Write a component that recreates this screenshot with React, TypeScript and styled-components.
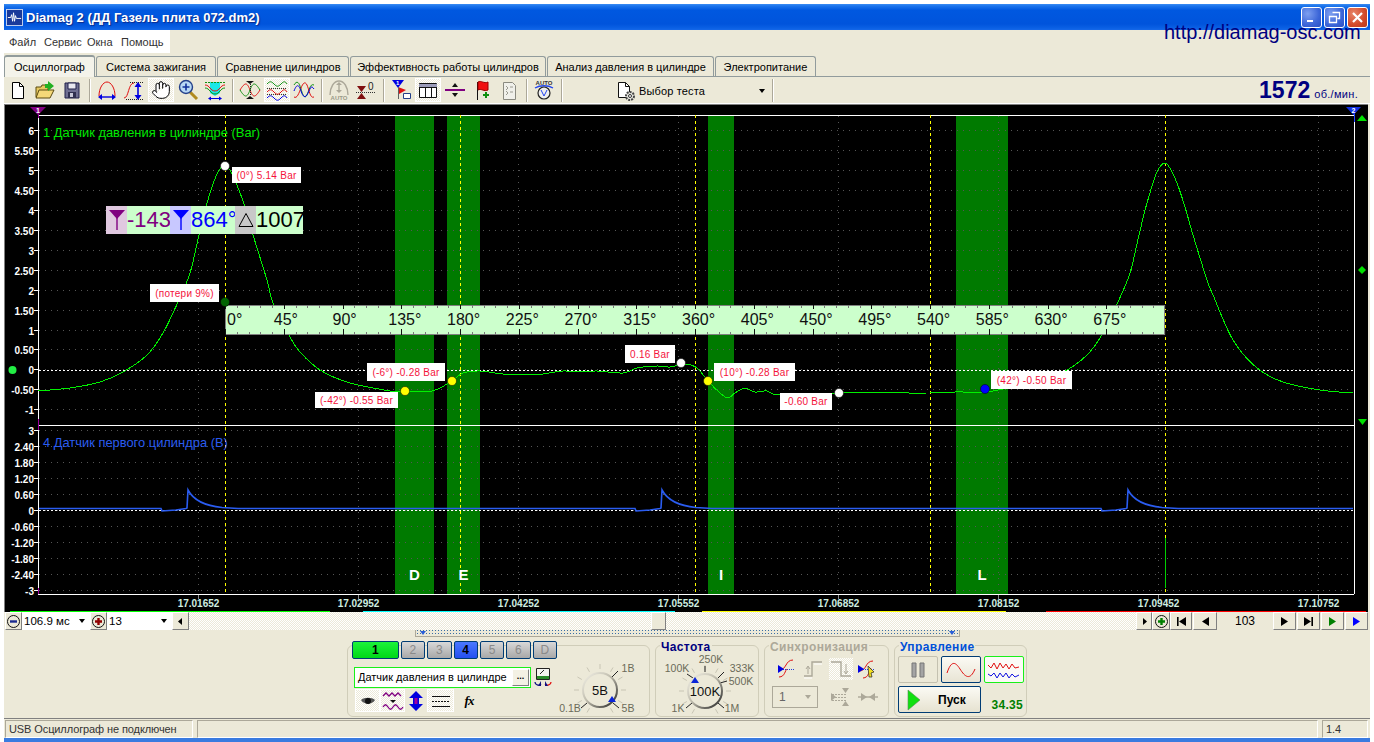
import styled, { createGlobalStyle } from "styled-components";
import { Hand } from "lucide-react";

const FONT = `"Liberation Sans", Arial, sans-serif`;
const BG = "#ece9d8";
const CHECKER = `repeating-conic-gradient(#ffffff 0 25%, #ece9d8 0 50%) 0 0 / 2px 2px`;

/* ---------- chart data, all in page pixels ---------- */
const PEAK: number[][] = [
    [38, 391], [70, 388], [100, 382], [123, 372], [147, 355], [163, 333], [178, 302], [190, 273],
    [199, 235], [207, 203], [217, 174], [225, 165], [231, 172], [237, 185], [245, 207], [253, 235],
    [267, 280], [273, 303], [290, 337], [300, 352], [320, 370], [350, 383], [390, 391],
];
const MIDDLE: number[][] = [
    [405, 391.5], [432, 391], [452, 381], [463, 373], [480, 371], [503, 374], [527, 375], [543, 374],
    [563, 371], [580, 372], [597, 371], [623, 373], [637, 368], [657, 366], [670, 367], [685, 364],
    [697, 368], [708, 381], [720, 393], [728, 398], [735, 393], [745, 388], [755, 392], [767, 391],
    [780, 395], [839, 393], [930, 393], [955, 392], [985, 392], [1003, 389], [1030, 382],
];
const SECOND: number[][] = [
    [1063, 372], [1087, 355], [1103, 333], [1118, 302], [1130, 273], [1139, 235], [1147, 203],
    [1157, 172], [1165, 163], [1171, 170], [1177, 183], [1185, 207], [1193, 235], [1207, 280],
    [1213, 295], [1233, 340], [1257, 368], [1283, 382], [1320, 390], [1353, 393],
];

function smooth(p: number[][]) {
    let d = `M${p[0][0]} ${p[0][1]}`;
    for (let i = 0; i < p.length - 1; i++) {
        const a = p[Math.max(i - 1, 0)];
        const b = p[i];
        const c = p[i + 1];
        const e = p[Math.min(i + 2, p.length - 1)];
        d += `C${b[0] + (c[0] - a[0]) / 6} ${b[1] + (c[1] - a[1]) / 6} ${c[0] - (e[0] - b[0]) / 6} ${c[1] - (e[1] - b[1]) / 6} ${c[0]} ${c[1]}`;
    }
    return d;
}

function blueTrace() {
    let d = "M39 508.5";
    [188, 662, 1128].forEach((s) => {
        d += `L${s - 27} 508.5 L${s - 26} 511 L${s - 12} 510 L${s - 2} 508.5 L${s - 1} 508 L${s} 490 `;
        d += `Q${s + 8} 505 ${s + 34} 507.5 L${s + 50} 508.5 `;
    });
    return d + "L1353 508.5";
}

const BANDS = [
    { x: 395, w: 39, t: "D" },
    { x: 447, w: 33, t: "E" },
    { x: 708, w: 26, t: "I" },
    { x: 956, w: 52, t: "L" },
];
const CURSORS = [225.5, 460.5, 695.5, 930.5, 1165.5];
const GRID_X = [198.5, 358.5, 518.5, 678.5, 838.5, 998.5, 1158.5, 1318.5];
const TIMES = ["17.01652", "17.02952", "17.04252", "17.05552", "17.06852", "17.08152", "17.09452", "17.10752"];
const TOP_AXIS = ["6", "5.50", "5", "4.50", "4", "3.50", "3", "2.50", "2", "1.50", "1", "0.50", "0", "-0.50", "-1"];
const LOW_AXIS = ["3", "2.40", "1.80", "1.20", "0.60", "0", "-0.60", "-1.20", "-1.80", "-2.40", "-3"];
const STRIP = [
    { x: 10, w: 320, c: "#00ff00" },
    { x: 363, w: 312, c: "#00ffff" },
    { x: 702, w: 304, c: "#ffff00" },
    { x: 1046, w: 320, c: "#ff0000" },
];
const TAGS = [
    { x: 232, y: 167, w: 69, h: 16, t: "(0°) 5.14 Bar" },
    { x: 150, y: 284, w: 69, h: 18, t: "(потери 9%)" },
    { x: 367, y: 363, w: 78, h: 18, t: "(-6°) -0.28 Bar" },
    { x: 315, y: 392, w: 83, h: 16, t: "(-42°) -0.55 Bar" },
    { x: 625, y: 345, w: 50, h: 18, t: "0.16 Bar" },
    { x: 714, y: 363, w: 81, h: 18, t: "(10°) -0.28 Bar" },
    { x: 780, y: 393, w: 52, h: 17, t: "-0.60 Bar" },
    { x: 991, y: 371, w: 81, h: 18, t: "(42°) -0.50 Bar" },
];
const DOTS = [
    { x: 225, y: 166, c: "#ffffff" },
    { x: 225, y: 302, c: "#006400" },
    { x: 405, y: 391, c: "#ffff00" },
    { x: 452, y: 381, c: "#ffff00" },
    { x: 708, y: 381, c: "#ffff00" },
    { x: 681, y: 363, c: "#ffffff" },
    { x: 839, y: 393, c: "#ffffff" },
    { x: 985, y: 389, c: "#0000ff" },
];

/* ---------- window shell ---------- */
const GlobalStyle = createGlobalStyle`
    html, body { margin: 0; padding: 0; background: #ffffff; }
    body { font-family: ${FONT}; overflow: hidden; }
    #root { padding: 4px 0 0 4px; }
`;

const Window = styled.div`
    position: relative;
    width: 1366px;
    height: 738px;
    background: ${BG};
    display: flex;
    flex-direction: column;
    overflow: hidden;
`;

const TitleBar = styled.div`
    height: 26px;
    display: flex;
    align-items: center;
    padding: 0 2px;
    gap: 3px;
    box-sizing: border-box;
    background: linear-gradient(to bottom, #3b8cf2 0, #1b74ec 2px, #0058e0 6px, #0054dc 20px, #0a60e4 24px, #1668e8 26px);
`;

const TitleText = styled.span`
    color: #ffffff;
    font-size: 13px;
    font-weight: bold;
    text-shadow: 1px 1px 1px #0c2a8a;
    white-space: nowrap;
`;

const WindowButtons = styled.div`
    margin-left: auto;
    display: flex;
    gap: 2px;
`;

const WindowButton = styled.div<{ $close?: boolean }>`
    width: 21px;
    height: 21px;
    box-sizing: border-box;
    border: 1px solid #ffffff;
    border-radius: 3px;
    display: flex;
    align-items: center;
    justify-content: center;
    background: ${(p) =>
        p.$close
            ? "radial-gradient(circle at 30% 30%, #e8866a, #d2492a 60%, #b93a1c)"
            : "radial-gradient(circle at 30% 30%, #7d9ff0, #3c66d8 60%, #2a50c4)"};
`;

const SiteLink = styled.div`
    position: absolute;
    top: 17px;
    left: 1160px;
    font-size: 20px;
    color: #000080;
    white-space: nowrap;
`;

const MenuBar = styled.div`
    height: 23px;
    width: 166px;
    background: #ffffff;
    display: flex;
    align-items: center;
    font-size: 11px;
    color: #333333;
    padding-left: 5px;
    box-sizing: border-box;
`;

const MenuItem = styled.span<{ $w: number }>`
    width: ${(p) => p.$w}px;
    white-space: nowrap;
`;

const TabStrip = styled.div`
    height: 24px;
    box-sizing: border-box;
    display: flex;
    align-items: flex-end;
    border-bottom: 1px solid #919b9c;
    gap: 1px;
`;

const Tab = styled.div<{ $w: number; $active?: boolean }>`
    width: ${(p) => p.$w}px;
    height: ${(p) => (p.$active ? 22 : 20)}px;
    margin-bottom: ${(p) => (p.$active ? -1 : 0)}px;
    box-sizing: border-box;
    border: 1px solid #919b9c;
    border-bottom: none;
    border-radius: 3px 3px 0 0;
    background: ${(p) => (p.$active ? "#f4f3ea" : BG)};
    border-top: ${(p) => (p.$active ? "2px solid #919b9c" : "1px solid #919b9c")};
    font-size: 11px;
    color: #000000;
    display: flex;
    align-items: center;
    justify-content: center;
    white-space: nowrap;
`;

const Toolbar = styled.div`
    height: 27px;
    box-sizing: border-box;
    padding: 1px 0 1px 1px;
    display: flex;
    align-items: center;
    border-bottom: 1px solid #ffffff;
`;

const ToolGroup = styled.div`
    display: flex;
    gap: 1px;
`;

const ToolButton = styled.div<{ $pressed?: boolean }>`
    width: 26px;
    height: 24px;
    box-sizing: border-box;
    display: flex;
    align-items: center;
    justify-content: center;
    ${(p) =>
        p.$pressed &&
        `background: ${CHECKER};
         border: 1px solid #ffffff;`}
`;

const ToolSep = styled.div`
    width: 2px;
    height: 23px;
    margin: 0 3px 0 4px;
    border-left: 1px solid #aca899;
    border-right: 1px solid #ffffff;
    box-sizing: border-box;
`;

const TestPicker = styled.div`
    width: 202px;
    display: flex;
    align-items: center;
    font-size: 11px;
    letter-spacing: 0.15px;
    padding: 1px 0 0 49px;
    box-sizing: border-box;
    gap: 2px;
`;

const Caret = styled.span<{ $right?: number }>`
    width: 0;
    height: 0;
    margin-left: ${(p) => p.$right ?? 0}px;
    border-left: 3.5px solid transparent;
    border-right: 3.5px solid transparent;
    border-top: 4px solid #000000;
`;

const Rpm = styled.div`
    margin-left: auto;
    padding-right: 12px;
    display: flex;
    align-items: baseline;
    gap: 4px;
    color: #000080;
    font-size: 11px;
    letter-spacing: 0.3px;
`;

const RpmValue = styled.span`
    font-size: 23px;
    font-weight: bold;
    letter-spacing: 0;
`;

/* ---------- chart ---------- */
const ChartPanel = styled.div`
    position: relative;
    height: 508px;
    margin-right: 2px;
    box-sizing: border-box;
    border-left: 1px solid #808080;
    border-top: 1px solid #808080;
    background: #000000;
`;

const ChartSvg = styled.svg`
    display: block;
    font-family: ${FONT};
`;

const AxisText = styled.text`
    fill: #ffffff;
    font-size: 10px;
    font-weight: bold;
    text-anchor: end;
`;

const TimeText = styled.text`
    fill: #cfeee0;
    font-size: 10px;
    font-weight: bold;
    text-anchor: middle;
`;

const ChannelTitle = styled.text<{ $c: string }>`
    fill: ${(p) => p.$c};
    font-size: 12.9px;
`;

const BandLetter = styled.text`
    fill: #ffffff;
    font-size: 15px;
    font-weight: bold;
    text-anchor: middle;
`;

const ScaleText = styled.text`
    fill: #101010;
    font-size: 16px;
`;

const Tag = styled.div<{ $x: number; $y: number; $w: number; $h: number }>`
    position: absolute;
    left: ${(p) => p.$x - 5}px;
    top: ${(p) => p.$y - 105}px;
    width: ${(p) => p.$w}px;
    height: ${(p) => p.$h}px;
    background: #ffffff;
    color: #f4123c;
    font-size: 10px;
    letter-spacing: 0.25px;
    display: flex;
    align-items: center;
    justify-content: center;
    white-space: nowrap;
`;

const Readout = styled.div`
    position: absolute;
    left: 101px;
    top: 101px;
    height: 28px;
    display: flex;
    font-size: 22px;
    line-height: 28px;
    background: #ccffcc;
`;

const ReadoutIcon = styled.div<{ $bg: string }>`
    width: 21px;
    background: ${(p) => p.$bg};
    display: flex;
    align-items: center;
    justify-content: center;
`;

const ReadoutValue = styled.div<{ $c: string; $w: number }>`
    width: ${(p) => p.$w}px;
    color: ${(p) => p.$c};
    text-align: center;
    white-space: nowrap;
`;

/* ---------- scroll row ---------- */
const ScrollRow = styled.div`
    height: 18px;
    padding-left: 1px;
    padding-right: 2px;
    display: flex;
`;

const Raised = styled.div<{ $w: number }>`
    width: ${(p) => p.$w}px;
    flex: none;
    box-sizing: border-box;
    border: 1px solid;
    border-color: #ffffff #808080 #808080 #ffffff;
    background: ${BG};
    display: flex;
    align-items: center;
    justify-content: center;
`;

const ComboCell = styled.div<{ $w: number }>`
    width: ${(p) => p.$w}px;
    flex: none;
    box-sizing: border-box;
    background: #ffffff;
    font-size: 11.5px;
    padding: 0 5px 0 2px;
    display: flex;
    align-items: center;
    justify-content: space-between;
    white-space: nowrap;
`;

const Track = styled.div`
    position: relative;
    flex: 1;
    background: ${CHECKER};
`;

const Thumb = styled(Raised)`
    position: absolute;
    left: 462px;
    top: 0;
    height: 18px;
`;

const Counter = styled.div`
    width: 56px;
    text-align: center;
    font-size: 12px;
    line-height: 18px;
`;

const NavGroup = styled.div`
    display: flex;
    gap: 1px;
`;

/* ---------- control groups ---------- */
const Controls = styled.div`
    height: 88px;
    flex: none;
    display: flex;
    flex-direction: column;
    align-items: center;
`;

const Splitter = styled.div`
    width: 545px;
    height: 7px;
    box-sizing: border-box;
    border: 1px solid #aca899;
    border-top: none;
    display: flex;
    align-items: center;
    justify-content: space-between;
    padding: 0 4px;
    background-image: radial-gradient(circle, #3a6ea5 0.6px, transparent 0.8px);
    background-size: 3px 3px;
    background-position: 0 2px;
`;

const SplitterArrow = styled.span`
    width: 0;
    height: 0;
    border-left: 3px solid transparent;
    border-right: 3px solid transparent;
    border-top: 4px solid #2a5fd8;
`;

const GroupRow = styled.div`
    margin-top: 8px;
    display: flex;
    gap: 5px;
`;

const GroupBox = styled.div<{ $w: number }>`
    width: ${(p) => p.$w}px;
    height: 72px;
    box-sizing: border-box;
    border: 1px solid #d0cdb9;
    border-radius: 6px;
    display: flex;
    flex-direction: column;
    padding-left: 4px;
`;

const GroupTitle = styled.div<{ $c: string }>`
    margin-top: -6px;
    height: 14px;
    align-self: flex-start;
    padding: 0 1px;
    background: ${BG};
    color: ${(p) => p.$c};
    font-size: 12px;
    font-weight: bold;
    letter-spacing: 0.35px;
    line-height: 14px;
    white-space: nowrap;
`;

const ChannelBody = styled.div`
    display: flex;
`;

const ChannelColumn = styled.div`
    width: 205px;
    margin-top: -5px;
`;

const ChannelRow = styled.div`
    display: flex;
    gap: 2px;
`;

const ChannelButton = styled.div<{ $w: number; $tone: "green" | "blue" | "off" }>`
    width: ${(p) => p.$w}px;
    height: 18px;
    box-sizing: border-box;
    border: 1px solid #003c74;
    border-radius: 2px;
    font-size: 12px;
    font-weight: ${(p) => (p.$tone === "off" ? "normal" : "bold")};
    color: ${(p) => (p.$tone === "off" ? "#8a8a8a" : "#000000")};
    text-align: center;
    line-height: 16px;
    background: ${(p) =>
        p.$tone === "green"
            ? "linear-gradient(#1cf23a, #00d818)"
            : p.$tone === "blue"
            ? "linear-gradient(#4a78ff, #2450f0)"
            : "linear-gradient(#d8d8d8, #a8a8a8)"};
`;

const SensorRow = styled.div`
    margin: 7px 0 0 2px;
    display: flex;
    align-items: center;
    gap: 1px;
`;

const SensorField = styled.div`
    width: 177px;
    height: 21px;
    box-sizing: border-box;
    border: 1px solid #19f019;
    background: #ffffff;
    font-size: 11px;
    padding-left: 3px;
    display: flex;
    align-items: center;
    justify-content: space-between;
    white-space: nowrap;
`;

const DotsButton = styled(Raised)`
    height: 17px;
    margin-right: 1px;
    font-size: 9px;
    font-weight: bold;
    line-height: 10px;
    align-items: flex-start;
    padding-top: 1px;
    background: #f3f1e4;
`;

const IconRow = styled.div`
    margin-top: 1px;
    display: flex;
    align-items: center;
    padding-left: 3px;
`;

const ChannelIcon = styled.div<{ $pressed?: boolean; $w?: number }>`
    width: ${(p) => p.$w ?? 25}px;
    height: 23px;
    box-sizing: border-box;
    display: flex;
    align-items: center;
    justify-content: center;
    ${(p) => p.$pressed && `background: ${CHECKER}; border: 1px solid #ffffff;`}
`;

const FxMark = styled.span`
    font-family: "Liberation Serif", serif;
    font-style: italic;
    font-weight: bold;
    font-size: 13px;
    letter-spacing: -1px;
`;

const KnobSvg = styled.svg<{ $top?: number }>`
    display: block;
    font-family: ${FONT};
    flex: none;
    margin-top: ${(p) => p.$top ?? 0}px;
`;

const KnobLabel = styled.text`
    fill: #6b6b58;
    font-size: 10.5px;
    text-anchor: middle;
`;

const KnobValue = styled.text`
    fill: #111111;
    font-size: 13px;
    text-anchor: middle;
`;

const SyncGrid = styled.div`
    display: grid;
    grid-template-columns: 26px 26px 28px 26px;
    grid-auto-rows: 22px;
    margin: 4px 0 0 6px;
    row-gap: 6px;
    justify-items: center;
    align-items: center;
`;

const SyncPressed = styled.div`
    width: 24px;
    height: 22px;
    background: ${CHECKER};
    display: flex;
    align-items: center;
    justify-content: center;
`;

const SyncSelect = styled.div`
    grid-column: span 2;
    width: 46px;
    height: 22px;
    margin-left: -12px;
    box-sizing: border-box;
    border: 1px solid #aca899;
    font-size: 12px;
    color: #666666;
    padding: 0 6px 0 6px;
    display: flex;
    align-items: center;
    justify-content: space-between;
`;

const SyncCaret = styled(Caret)`
    border-top-color: #aca899;
`;

const RunGrid = styled.div`
    display: grid;
    grid-template-columns: 40px 40px 40px;
    grid-template-rows: 27px 27px;
    column-gap: 3px;
    row-gap: 3px;
    margin: 2px 0 0 -1px;
`;

const ModeButton = styled.div<{ $border: string; $bg?: string }>`
    box-sizing: border-box;
    border: ${(p) => p.$border};
    border-radius: 2px;
    background: ${(p) => p.$bg ?? BG};
    display: flex;
    align-items: center;
    justify-content: center;
`;

const StartButton = styled.div`
    grid-column: span 2;
    box-sizing: border-box;
    width: 83px;
    border: 1px solid #003c74;
    border-radius: 2px;
    background: linear-gradient(#fbfaf4, #e6e2d0);
    display: flex;
    align-items: center;
    padding-left: 8px;
    gap: 17px;
    font-size: 12px;
    font-weight: bold;
`;

const Elapsed = styled.div`
    color: #008000;
    font-size: 12px;
    font-weight: bold;
    letter-spacing: 0.3px;
    align-self: end;
    text-align: right;
    padding-right: 1px;
    line-height: 15px;
`;

/* ---------- status ---------- */
const StatusLine = styled.div`
    height: 2px;
    flex: none;
    background: #ece9d8;
    border-top: 1px solid #808080;
    box-sizing: border-box;
`;

const StatusBar = styled.div`
    height: 18px;
    flex: none;
    display: flex;
    gap: 4px;
    padding-left: 1px;
    padding-right: 2px;
`;

const StatusCell = styled.div<{ $w?: number }>`
    ${(p) => (p.$w ? `width: ${p.$w}px;` : "flex: 1;")}
    box-sizing: border-box;
    border: 1px solid;
    border-color: #aca899 #ffffff #ffffff #aca899;
    font-size: 11px;
    letter-spacing: -0.1px;
    color: #333333;
    padding-left: 3px;
    line-height: 16px;
    white-space: nowrap;
`;

const BottomEdge = styled.div`
    height: 4px;
    flex: none;
    background: #3a7be0;
`;

/* ---------- icons ---------- */
const Glyph = styled.svg.attrs({ viewBox: "0 0 22 22", width: 22, height: 22, fill: "none" })`
    display: block;
`;

const TinyText = styled.text`
    font-family: ${FONT};
    font-size: 6px;
    font-weight: bold;
`;

const NewIcon = () => (
    <Glyph>
        <path d="M5.5 3.5h7l4 4v12h-11z" fill="#fff" stroke="#000" />
        <path d="M12.5 3.5v4h4" stroke="#000" />
    </Glyph>
);
const OpenIcon = () => (
    <Glyph>
        <path d="M2 8h5l1-2h6v12H2z" fill="#e6c860" stroke="#5a4a10" />
        <path d="M2 19l3-8h15l-4 8z" fill="#f4d878" stroke="#5a4a10" />
        <path d="M14 2l6 5-6 5V9h-3V5h3z" fill="#22b022" />
    </Glyph>
);
const SaveIcon = () => (
    <Glyph>
        <path d="M4 4h14v15H4z" fill="#6e6e90" stroke="#20204a" />
        <path d="M7 4h8v6H7z" fill="#e8e8f0" stroke="#20204a" />
        <path d="M7 13h8v6H7z" fill="#303050" />
        <path d="M9 14h3v4H9z" fill="#c8c8d8" />
    </Glyph>
);
const ArchIcon = () => (
    <Glyph>
        <path d="M3 17C3 9 7 3 11 3s8 6 8 14" stroke="#e01010" />
        <path d="M4 18h14" stroke="#0000e0" strokeWidth="1.4" />
        <path d="M2 18l4-3v6zM20 18l-4-3v6z" fill="#0000e0" />
    </Glyph>
);
const HeightIcon = () => (
    <Glyph>
        <path d="M1 19c5 0 4-15 10-15" stroke="#e01010" />
        <path d="M7 3.5h13M3 20.5h17" stroke="#222" strokeDasharray="1 1" />
        <path d="M15 7v10" stroke="#0000e0" strokeWidth="1.6" />
        <path d="M15 3l3.5 5h-7zM15 21l3.5-5h-7z" fill="#0000e0" />
    </Glyph>
);
const ZoomIcon = () => (
    <Glyph>
        <path d="M13 13l7 7" stroke="#b08a20" strokeWidth="3" />
        <circle cx="9" cy="8" r="6.5" fill="#b8d8f4" stroke="#24408a" strokeWidth="1.4" />
        <path d="M5.5 8h7M9 4.5v7" stroke="#10309a" strokeWidth="1.6" />
    </Glyph>
);
const RegionIcon = () => (
    <Glyph>
        <path d="M6 3h10v11l-5 3-5-3z" fill="#19e8e8" />
        <path d="M1 6c5 0 5 6 10 6s5-6 10-6" stroke="#e01010" />
        <path d="M1 9c5 0 5 6 10 6s5-6 10-6" stroke="#109010" />
        <path d="M1 3.5h20" stroke="#109010" strokeDasharray="2 1" />
        <path d="M5 19.5h12" stroke="#0000e0" />
        <path d="M4 19.5l3-2v4zM18 19.5l-3-2v4z" fill="#0000e0" />
    </Glyph>
);
const CrossIcon = () => (
    <Glyph>
        <path d="M1 11c5-8 7-8 10 0s5 8 10 0" stroke="#e01010" />
        <path d="M1 11c5 8 7 8 10 0s5-8 10 0" stroke="#109010" />
        <path d="M11.5 5v12" stroke="#222" strokeDasharray="1 1" />
        <path d="M7 2h8l-4 3zM7 20h8l-4-3z" fill="#111" />
    </Glyph>
);
const StackedIcon = () => (
    <Glyph>
        <path d="M1 5c3-3 4-3 7 0s4 3 7 0 4-3 6 0" stroke="#109010" />
        <path d="M1 9.5h20M1 15.5h20" stroke="#333" strokeDasharray="1 1" />
        <path d="M1 13c3-3 4-3 7 0s4 3 7 0 4-3 6 0" stroke="#e01010" />
        <path d="M1 19c3-3 4-3 7 0s4 3 7 0 4-3 6 0" stroke="#0000e0" />
    </Glyph>
);
const OverlapIcon = () => (
    <Glyph>
        <path d="M1 6c3-5 5-3 7 4s4 10 6 6 3-12 7-10" stroke="#109010" />
        <path d="M1 18c3 2 5-4 7-9s4-7 6-3 3 14 7 12" stroke="#e01010" />
        <path d="M1 12c3-8 5-6 7 0s4 8 7 2 3-8 6-4" stroke="#0000e0" />
    </Glyph>
);
const AutoRangeIcon = () => (
    <Glyph>
        <path d="M2 16C2 8 6 2 11 2s9 6 9 14" stroke="#aca899" strokeWidth="1.4" />
        <path d="M11 4v9" stroke="#aca899" strokeWidth="1.4" />
        <path d="M8 6l3-3 3 3zM8 11l3 3 3-3z" fill="#aca899" />
        <TinyText x="11" y="21" textAnchor="middle" fill="#9a9a88">AUTO</TinyText>
    </Glyph>
);
const ZeroIcon = () => (
    <Glyph>
        <path d="M1 13.5h20" stroke="#333" strokeDasharray="1 1" />
        <path d="M2 7h9l-4.5 6zM2 20h9l-4.5-6z" fill="#801010" />
        <text x="13" y="11" fontFamily={FONT} fontSize="10" fill="#222">0</text>
    </Glyph>
);
const ThresholdIcon = () => (
    <Glyph>
        <path d="M2 1h12l-6 8z" fill="#0000e0" />
        <path d="M8 8l8 3-7 4z" fill="#e01010" />
        <path d="M8.5 8v12" stroke="#606060" />
        <path d="M13.5 14.5h7v5h-7z" fill="#fff" stroke="#24408a" />
        <TinyText x="6" y="6" fill="#fff">1</TinyText>
    </Glyph>
);
const TableIcon = () => (
    <Glyph>
        <path d="M2.5 4.5h17v14h-17z" fill="#fff" stroke="#111" />
        <path d="M2 5h18v3H2z" fill="#9a9ab8" />
        <path d="M2 8.5h18M8.5 8v11M14.5 8v11" stroke="#111" />
    </Glyph>
);
const SplitIcon = () => (
    <Glyph>
        <path d="M1 11h20" stroke="#800080" strokeWidth="2" />
        <path d="M8 8l3-4 3 4zM8 14l3 4 3-4z" fill="#111" />
    </Glyph>
);
const FlagIcon = () => (
    <Glyph>
        <path d="M6.5 3v18" stroke="#111" />
        <path d="M7 3c3-2 6 2 10 0v8c-4 2-7-2-10 0z" fill="#f01010" stroke="#900" />
        <path d="M15 13v6M12 16h6" stroke="#109010" strokeWidth="2" />
    </Glyph>
);
const NotesIcon = () => (
    <Glyph>
        <path d="M5.5 3.5h9l3 3v14h-12z" fill="#f0f0ea" stroke="#8a8a80" />
        <path d="M8 7l2 2-2 2M8 12l2 2-2 2M12 8h3M12 13h3" stroke="#9a9a90" />
    </Glyph>
);
const AutoGaugeIcon = () => (
    <Glyph>
        <TinyText x="11" y="6" textAnchor="middle" fill="#333">AUTO</TinyText>
        <path d="M2 9c5-3 13-3 18 0" stroke="#2244ee" strokeWidth="1.4" />
        <circle cx="11" cy="14" r="6" fill="#eee" stroke="#222" strokeWidth="1.2" />
        <path d="M8 11l3 6 3-6" stroke="#2244ee" />
    </Glyph>
);
const TestDocIcon = () => (
    <Glyph>
        <path d="M3.5 2.5h7l4 4v11h-11z" fill="#fff" stroke="#111" />
        <path d="M10.5 2.5v4h4" stroke="#111" />
        <circle cx="15" cy="16" r="4" fill="#e8e8e0" stroke="#444" strokeDasharray="2 1" strokeWidth="2" />
        <circle cx="15" cy="16" r="1.5" fill="#fff" stroke="#333" />
    </Glyph>
);

const AppIcon = () => (
    <svg width="17" height="17" viewBox="0 0 18 18">
        <rect x="0.5" y="0.5" width="17" height="17" fill="#1a3a9a" stroke="#c8d4f0" />
        <path d="M2 9h3l1-3 1 7 1-9 1 9 1-6 1 3h5" fill="none" stroke="#ffffff" />
    </svg>
);

const SmallSvg = styled.svg.attrs({ width: 13, height: 13, viewBox: "0 0 13 13", fill: "none" })`
    display: block;
`;

const RoundGlyph = ({ c, plus }: { c: string; plus?: boolean }) => (
    <SmallSvg>
        <circle cx="6.5" cy="6.5" r="6" fill="#ece9d8" stroke="#111" />
        <path d={plus ? "M3 6.5h7M6.5 3v7" : "M3 6.5h7"} stroke={c} strokeWidth="2.4" />
    </SmallSvg>
);

const Tri = ({ d, c = "#000" }: { d: string; c?: string }) => (
    <SmallSvg>
        <path d={d} fill={c} />
    </SmallSvg>
);

const Marker = ({ c }: { c: string }) => (
    <svg width="18" height="24" viewBox="0 0 18 24">
        <path d="M1 2h16l-8 9z" fill={c} />
        <path d="M9 8v14" stroke={c} strokeWidth="1.4" />
    </svg>
);

type KnobProps = {
    box: [number, number, number, number];
    cx: number;
    cy: number;
    value: string;
    pointer: [number, number];
    labels: { x: number; y: number; t: string }[];
    leads: number[][];
    top?: number;
};

function Knob({ box, cx, cy, value, pointer, labels, leads, top }: KnobProps) {
    const ticks = Array.from({ length: 11 }, (_, i) => (-150 + i * 30) * (Math.PI / 180));
    return (
        <KnobSvg $top={top} width={box[2]} height={box[3]} viewBox={box.join(" ")}>
            <defs>
                <linearGradient id={`ring${cx}`} x1="0" y1="0" x2="1" y2="1">
                    <stop offset="0" stopColor="#f4f2e8" />
                    <stop offset="0.45" stopColor="#c0bdae" />
                    <stop offset="1" stopColor="#222222" />
                </linearGradient>
            </defs>
            {ticks.map((a) => (
                <path
                    key={a}
                    d={`M${cx + Math.sin(a) * 21} ${cy - Math.cos(a) * 21}L${cx + Math.sin(a) * 26} ${cy - Math.cos(a) * 26}`}
                    stroke="#c8c5b4"
                />
            ))}
            {leads.map((l) => (
                <path key={l.join()} d={`M${l[0]} ${l[1]}L${l[2]} ${l[3]}`} stroke="#222" />
            ))}
            <circle cx={cx} cy={cy} r="17" fill={BG} stroke={`url(#ring${cx})`} strokeWidth="2" />
            <path d={`M${pointer[0]} ${pointer[1] - 4}l4 6h-8z`} fill="#0a24d8" />
            <KnobValue x={cx} y={cy + 5}>{value}</KnobValue>
            {labels.map((l) => (
                <KnobLabel key={l.t} x={l.x} y={l.y}>{l.t}</KnobLabel>
            ))}
        </KnobSvg>
    );
}

function Chart() {
    const yTop = (i: number) => Math.round(130 + i * 19.95) + 0.5;
    const yLow = (i: number) => Math.round(430 + i * 16) + 0.5;
    return (
        <ChartSvg width="1363" height="507" viewBox="5 105 1363 507">
            {BANDS.map((b) => (
                <rect key={b.x} x={b.x} y="115" width={b.w} height="479" fill="#007a00" />
            ))}
            {GRID_X.map((x) => (
                <g key={x}>
                    <path d={`M${x} 116V594`} stroke="#555555" strokeDasharray="1 5" />
                    <path d={`M${x} 594V599`} stroke="#8a8a8a" />
                </g>
            ))}
            {TOP_AXIS.map((t, i) => (
                <g key={t}>
                    <path d={`M39 ${yTop(i)}H1353`} stroke="#555555" strokeDasharray="1 5" />
                    <path d={`M34 ${yTop(i)}H38`} stroke="#ffffff" />
                    <AxisText x="34" y={yTop(i) + 4}>{t}</AxisText>
                </g>
            ))}
            {LOW_AXIS.map((t, i) => (
                <g key={t}>
                    <path d={`M39 ${yLow(i)}H1353`} stroke="#555555" strokeDasharray="1 5" />
                    <path d={`M34 ${yLow(i)}H38`} stroke="#ffffff" />
                    <AxisText x="34" y={yLow(i) + 4}>{t}</AxisText>
                </g>
            ))}
            <path d="M38 115.5H1354M38 425.5H1354M38 594.5H1354" stroke="#ffffff" />
            <path d="M38.5 115V594M1354.5 115V594" stroke="#ffffff" />
            <path d="M38.5 107V118M38.5 419V430M38.5 588V594" stroke="#a000a0" />
            <path d="M1354.5 112V122" stroke="#2040ff" />
            {CURSORS.map((x) => (
                <path key={x} d={`M${x} 115V594`} stroke="#ffff00" strokeDasharray="3 3" />
            ))}
            <path d="M39 370.5H1353M39 510.5H1353" stroke="#ffffff" strokeDasharray="2 2" />

            <path d={smooth(PEAK)} stroke="#00f000" fill="none" shapeRendering="crispEdges" />
            <path d={smooth([[390, 391], ...MIDDLE])} stroke="#00f000" fill="none" shapeRendering="crispEdges" />
            <path d={smooth([[1030, 382], ...SECOND])} stroke="#00f000" fill="none" shapeRendering="crispEdges" />
            <path d={blueTrace()} stroke="#2a5cf0" strokeWidth="1.6" fill="none" />
            <path d="M1165.5 538V588" stroke="#00d000" />

            {BANDS.map((b) => (
                <BandLetter key={b.t} x={b.x + b.w / 2} y="580">{b.t}</BandLetter>
            ))}
            <ChannelTitle x="43" y="137" $c="#00e800">1 Датчик давления в цилиндре (Bar)</ChannelTitle>
            <ChannelTitle x="43" y="447" $c="#2a5cf0">4 Датчик первого цилиндра (B)</ChannelTitle>

            <rect x="225.5" y="305.5" width="939" height="29" fill="#ccffcc" stroke="#808080" />
            {Array.from({ length: 81 }, (_, i) => {
                const x = Math.round(225 + i * 11.75) + 0.5;
                const major = i % 5 === 0;
                return (
                    <path
                        key={i}
                        d={major ? `M${x} 305V309M${x} 329V335` : `M${x} 305V308M${x} 332V335`}
                        stroke={major ? "#111" : "#777"}
                    />
                );
            })}
            {Array.from({ length: 16 }, (_, i) => {
                const deg = i * 45;
                const tick = 225 + i * 58.75;
                const x = deg === 0 ? 227 : deg < 100 ? tick - 10 : tick - 13;
                return <ScaleText key={deg} x={x} y="325">{`${deg}°`}</ScaleText>;
            })}

            {DOTS.map((d) => (
                <circle key={`${d.x}${d.y}`} cx={d.x} cy={d.y} r="4.5" fill={d.c} stroke="#000" strokeWidth="0.5" />
            ))}

            <circle cx="12.5" cy="370" r="4" fill="#22ee44" />
            <path d="M30 107h16l-8 8z" fill="#800080" />
            <text x="38" y="113" fontSize="7" fontWeight="bold" fill="#fff" textAnchor="middle">1</text>
            <path d="M1346 107h15l-7.5 8z" fill="#1030e0" />
            <text x="1353.5" y="113" fontSize="7" fontWeight="bold" fill="#fff" textAnchor="middle">2</text>
            <path d="M1362 115l5 6h-10z" fill="#00e000" />
            <path d="M1362 266l4 4-4 4-4-4z" fill="#00e000" />
            <path d="M1358 419h9l-4.5 6z" fill="#00e000" />

            {TIMES.map((t, i) => (
                <TimeText key={t} x={GRID_X[i]} y="607">{t}</TimeText>
            ))}
            {STRIP.map((s) => (
                <rect key={s.x} x={s.x} y="611" width={s.w} height="1" fill={s.c} />
            ))}
        </ChartSvg>
    );
}

export default function App() {
    return (
        <Window>
            <GlobalStyle />
            <TitleBar>
                <AppIcon />
                <TitleText>Diamag 2 (ДД Газель плита 072.dm2)</TitleText>
                <WindowButtons>
                    <WindowButton>
                        <svg width="11" height="11" viewBox="0 0 11 11"><path d="M1 8h6v2H1z" fill="#fff" /></svg>
                    </WindowButton>
                    <WindowButton>
                        <svg width="13" height="13" viewBox="0 0 13 13" fill="none">
                            <path d="M4.5 1.5h7v6h-2M1.5 5.5h7v6h-7z" stroke="#fff" strokeWidth="1.3" />
                        </svg>
                    </WindowButton>
                    <WindowButton $close>
                        <svg width="13" height="13" viewBox="0 0 13 13"><path d="M2 2l9 9M11 2l-9 9" stroke="#fff" strokeWidth="2.2" /></svg>
                    </WindowButton>
                </WindowButtons>
            </TitleBar>
            <SiteLink>http://diamag-osc.com</SiteLink>

            <MenuBar>
                <MenuItem $w={35}>Файл</MenuItem>
                <MenuItem $w={43}>Сервис</MenuItem>
                <MenuItem $w={34}>Окна</MenuItem>
                <MenuItem $w={40}>Помощь</MenuItem>
            </MenuBar>

            <TabStrip>
                <Tab $w={91} $active>Осциллограф</Tab>
                <Tab $w={120}>Система зажигания</Tab>
                <Tab $w={132}>Сравнение цилиндров</Tab>
                <Tab $w={196}>Эффективность работы цилиндров</Tab>
                <Tab $w={167}>Анализ давления в цилиндре</Tab>
                <Tab $w={101}>Электропитание</Tab>
            </TabStrip>

            <Toolbar>
                <ToolGroup>
                    <ToolButton><NewIcon /></ToolButton>
                    <ToolButton><OpenIcon /></ToolButton>
                    <ToolButton><SaveIcon /></ToolButton>
                </ToolGroup>
                <ToolSep />
                <ToolGroup>
                    <ToolButton><ArchIcon /></ToolButton>
                    <ToolButton><HeightIcon /></ToolButton>
                    <ToolButton $pressed><Hand size={20} color="#000" fill="#fff" strokeWidth={1.2} /></ToolButton>
                    <ToolButton><ZoomIcon /></ToolButton>
                    <ToolButton><RegionIcon /></ToolButton>
                </ToolGroup>
                <ToolSep />
                <ToolGroup>
                    <ToolButton><CrossIcon /></ToolButton>
                    <ToolButton $pressed><StackedIcon /></ToolButton>
                    <ToolButton><OverlapIcon /></ToolButton>
                </ToolGroup>
                <ToolSep />
                <ToolGroup>
                    <ToolButton><AutoRangeIcon /></ToolButton>
                    <ToolButton><ZeroIcon /></ToolButton>
                </ToolGroup>
                <ToolSep />
                <ToolGroup>
                    <ToolButton><ThresholdIcon /></ToolButton>
                    <ToolButton $pressed><TableIcon /></ToolButton>
                    <ToolButton><SplitIcon /></ToolButton>
                    <ToolButton><FlagIcon /></ToolButton>
                    <ToolButton><NotesIcon /></ToolButton>
                </ToolGroup>
                <ToolSep />
                <ToolButton><AutoGaugeIcon /></ToolButton>
                <ToolSep />
                <TestPicker>
                    <TestDocIcon />
                    Выбор теста
                    <Caret $right={52} />
                </TestPicker>
                <ToolSep />
                <Rpm><RpmValue>1572</RpmValue>об./мин.</Rpm>
            </Toolbar>

            <ChartPanel>
                <Chart />
                {TAGS.map((t) => (
                    <Tag key={t.t} $x={t.x} $y={t.y} $w={t.w} $h={t.h}>{t.t}</Tag>
                ))}
                <Readout>
                    <ReadoutIcon $bg="#e0c8e0"><Marker c="#800080" /></ReadoutIcon>
                    <ReadoutValue $c="#800080" $w={43}>-143</ReadoutValue>
                    <ReadoutIcon $bg="#c8c8ff"><Marker c="#0000ff" /></ReadoutIcon>
                    <ReadoutValue $c="#0000ff" $w={44}>864°</ReadoutValue>
                    <ReadoutIcon $bg="#c8c8c8">
                        <svg width="16" height="16" viewBox="0 0 16 16" fill="none"><path d="M8 1.5l7 13H1z" stroke="#000" /></svg>
                    </ReadoutIcon>
                    <ReadoutValue $c="#000000" $w={47}>1007</ReadoutValue>
                </Readout>
            </ChartPanel>

            <ScrollRow>
                <Raised $w={17}><RoundGlyph c="#1a2a90" /></Raised>
                <ComboCell $w={68}>106.9 мс <Caret /></ComboCell>
                <Raised $w={17}><RoundGlyph c="#900000" plus /></Raised>
                <ComboCell $w={65}>13 <Caret /></ComboCell>
                <Raised $w={17}><Tri d="M8 3v7L4 6.5z" /></Raised>
                <Track><Thumb $w={15} /></Track>
                <Raised $w={16}><Tri d="M5 3v7l4-3.5z" /></Raised>
                <Raised $w={18}><RoundGlyph c="#008000" plus /></Raised>
                <NavGroup>
                    <Raised $w={22}><Tri d="M2 2h1.6v9H2zM11 2v9L4 6.5z" /></Raised>
                    <Raised $w={24}><Tri d="M10 2v9L3 6.5z" /></Raised>
                </NavGroup>
                <Counter>103</Counter>
                <NavGroup>
                    <Raised $w={23}><Tri d="M3 2v9l7-4.5z" /></Raised>
                    <Raised $w={23}><Tri d="M2 2v9l7-4.5zM9.4 2H11v9H9.4z" /></Raised>
                    <Raised $w={23}><Tri d="M3 2v9l7-4.5z" c="#008000" /></Raised>
                    <Raised $w={23}><Tri d="M3 2v9l7-4.5z" c="#0000ff" /></Raised>
                </NavGroup>
            </ScrollRow>

            <Controls>
                <Splitter><SplitterArrow /><SplitterArrow /></Splitter>
                <GroupRow>
                    <GroupBox $w={303}>
                        <ChannelBody>
                            <ChannelColumn>
                                <ChannelRow>
                                    <ChannelButton $w={48} $tone="green">1</ChannelButton>
                                    <ChannelButton $w={25} $tone="off">2</ChannelButton>
                                    <ChannelButton $w={25} $tone="off">3</ChannelButton>
                                    <ChannelButton $w={25} $tone="blue">4</ChannelButton>
                                    <ChannelButton $w={25} $tone="off">5</ChannelButton>
                                    <ChannelButton $w={25} $tone="off">6</ChannelButton>
                                    <ChannelButton $w={25} $tone="off">D</ChannelButton>
                                </ChannelRow>
                                <SensorRow>
                                    <SensorField>
                                        Датчик давления в цилиндре
                                        <DotsButton $w={17}>...</DotsButton>
                                    </SensorField>
                                    <Glyph>
                                        <path d="M4.5 2.5h13v11h-13z" fill="#f4f4f0" stroke="#222" />
                                        <path d="M5 10h12v3H5z" fill="#2a8a2a" />
                                        <path d="M8 8l4-4" stroke="#222" />
                                        <path d="M3 16c0 3 4 4 6 2" stroke="#101080" strokeWidth="1.3" />
                                        <path d="M19 16c0 3-4 4-6 2" stroke="#e01010" strokeWidth="1.3" />
                                        <path d="M9 15v5H6zM13 15v5h3z" fill="#101080" />
                                    </Glyph>
                                </SensorRow>
                                <IconRow>
                                    <ChannelIcon $pressed>
                                        <Glyph>
                                            <path d="M4 10c3-3 11-3 14 0-3 5-11 5-14 0z" fill="#555" />
                                            <circle cx="11" cy="11" r="3" fill="#111" />
                                        </Glyph>
                                    </ChannelIcon>
                                    <ChannelIcon $pressed>
                                        <Glyph>
                                            <path d="M1 6l3-3 3 3 3-3 3 3 3-3 3 3" stroke="#800080" strokeWidth="1.3" />
                                            <path d="M1 17c2-3 3-3 5 0s3 3 5 0 3-3 5 0 3 3 5 0" stroke="#800080" strokeWidth="1.3" />
                                            <path d="M8 10h6l-3 3z" fill="#111" />
                                        </Glyph>
                                    </ChannelIcon>
                                    <ChannelIcon $w={22}>
                                        <Glyph>
                                            <path d="M4 8l7-7 7 7h-4v6h4l-7 7-7-7h4V8z" fill="#0000e0" />
                                            <path d="M9.5 8h3v6h-3z" fill="#a000a0" />
                                        </Glyph>
                                    </ChannelIcon>
                                    <ChannelIcon $w={27} $pressed>
                                        <Glyph>
                                            <path d="M2 6.5h18M2 16.5h18" stroke="#111" />
                                            <path d="M2 11.5h18" stroke="#111" strokeDasharray="2 1" />
                                        </Glyph>
                                    </ChannelIcon>
                                    <ChannelIcon $w={30}><FxMark>fx</FxMark></ChannelIcon>
                                </IconRow>
                            </ChannelColumn>
                            <Knob
                                box={[557, 660, 90, 56]}
                                top={14}
                                cx={600}
                                cy={690}
                                value="5B"
                                pointer={[612, 700]}
                                labels={[
                                    { x: 628, y: 672, t: "1B" },
                                    { x: 628, y: 712, t: "5B" },
                                    { x: 570, y: 712, t: "0.1B" },
                                ]}
                                leads={[[612, 677, 618, 671], [613, 703, 619, 708], [587, 703, 581, 708]]}
                            />
                        </ChannelBody>
                    </GroupBox>

                    <GroupBox $w={104}>
                        <GroupTitle $c="#000080">Частота</GroupTitle>
                        <Knob
                            box={[660, 654, 97, 61]}
                            cx={705}
                            cy={691}
                            value="100K"
                            pointer={[695, 681]}
                            labels={[
                                { x: 677, y: 672, t: "100K" },
                                { x: 711, y: 663, t: "250K" },
                                { x: 742, y: 672, t: "333K" },
                                { x: 741, y: 685, t: "500K" },
                                { x: 678, y: 712, t: "1K" },
                                { x: 732, y: 712, t: "1M" },
                            ]}
                            leads={[[693, 678, 687, 674], [705, 672, 705, 666], [718, 678, 724, 672], [720, 683, 727, 681], [692, 703, 686, 708], [718, 703, 724, 708]]}
                        />
                    </GroupBox>

                    <GroupBox $w={125}>
                        <GroupTitle $c="#aca899">Синхронизация</GroupTitle>
                        <SyncGrid>
                            <Glyph>
                                <path d="M2 12c8 0 6-10 14-10M2 19c6 0 6-7 8-8" stroke="#e01010" />
                                <path d="M2 11.5h16" stroke="#2040e0" strokeDasharray="1 1" />
                                <path d="M1 7l6 4-6 4z" fill="#0000e0" />
                            </Glyph>
                            <Glyph>
                                <path d="M1 18h8V4h10" stroke="#aca899" strokeWidth="1.4" />
                                <path d="M1 20h8M11 6h8" stroke="#ffffff" />
                                <path d="M5 16V9M3 11l2-3 2 3" stroke="#aca899" />
                            </Glyph>
                            <SyncPressed>
                                <Glyph>
                                    <path d="M1 4h10v14h10" stroke="#aca899" strokeWidth="1.4" />
                                    <path d="M16 6v9M14 13l2 3 2-3" stroke="#aca899" />
                                </Glyph>
                            </SyncPressed>
                            <Glyph>
                                <path d="M2 13c8 0 6-10 14-10M6 20c6 0 6-8 8-10" stroke="#e01010" />
                                <path d="M2 11.5h16" stroke="#2040e0" strokeDasharray="1 1" />
                                <path d="M1 7l6 4-6 4z" fill="#0000e0" />
                                <path d="M11 8l6 6-3 1 1 4-3 0z" fill="#f4e020" stroke="#222" strokeWidth="0.7" />
                            </Glyph>
                            <SyncSelect>1 <SyncCaret /></SyncSelect>
                            <Glyph>
                                <path d="M2 8.5h14M2 11.5h14M2 14.5h14" stroke="#aca899" strokeDasharray="2 1" />
                                <path d="M12 2h7l-3.5 5zM12 20h7l-3.5-5z" fill="#aca899" />
                                <path d="M1 7l5 4-5 4z" fill="#aca899" />
                            </Glyph>
                            <Glyph>
                                <path d="M1 11h20" stroke="#aca899" strokeWidth="1.4" />
                                <path d="M4 7l6 4-6 4zM18 7l-6 4 6 4z" fill="#aca899" />
                            </Glyph>
                        </SyncGrid>
                    </GroupBox>

                    <GroupBox $w={133}>
                        <GroupTitle $c="#0050d8">Управление</GroupTitle>
                        <RunGrid>
                            <ModeButton $border="1px solid #c4c1b0">
                                <svg width="16" height="16" viewBox="0 0 16 16">
                                    <path d="M2 1h4v14H2zM10 1h4v14h-4z" fill="#a4a4a4" stroke="#777" />
                                </svg>
                            </ModeButton>
                            <ModeButton $border="1px solid #003c74" $bg="linear-gradient(#fbfaf4, #e8e4d4)">
                                <svg width="30" height="22" viewBox="0 0 30 22" fill="none">
                                    <path d="M1 14C5 2 9 2 14 10s10 12 15 0" stroke="#e01010" />
                                </svg>
                            </ModeButton>
                            <ModeButton $border="1px solid #19f019" $bg="#fbfaf6">
                                <svg width="34" height="22" viewBox="0 0 34 22" fill="none">
                                    <path d="M1 6l3 3 3-5 3 6 3-6 3 5 3-4 3 5 3-5 3 4 4-1" stroke="#e01010" />
                                    <path d="M1 15l3 2 3-3 3 5 3-5 3 4 3-4 3 5 3-4 3 3 4-2" stroke="#1010e0" />
                                </svg>
                            </ModeButton>
                            <StartButton>
                                <svg width="14" height="22" viewBox="0 0 14 22"><path d="M1 1l12 10L1 21z" fill="#10e010" stroke="#5a8a5a" strokeWidth="0.6" /></svg>
                                Пуск
                            </StartButton>
                            <Elapsed>34.35</Elapsed>
                        </RunGrid>
                    </GroupBox>
                </GroupRow>
            </Controls>

            <StatusLine />
            <StatusBar>
                <StatusCell $w={188}>USB Осциллограф не подключен</StatusCell>
                <StatusCell />
                <StatusCell $w={46}>1.4</StatusCell>
            </StatusBar>
            <BottomEdge />
        </Window>
    );
}
